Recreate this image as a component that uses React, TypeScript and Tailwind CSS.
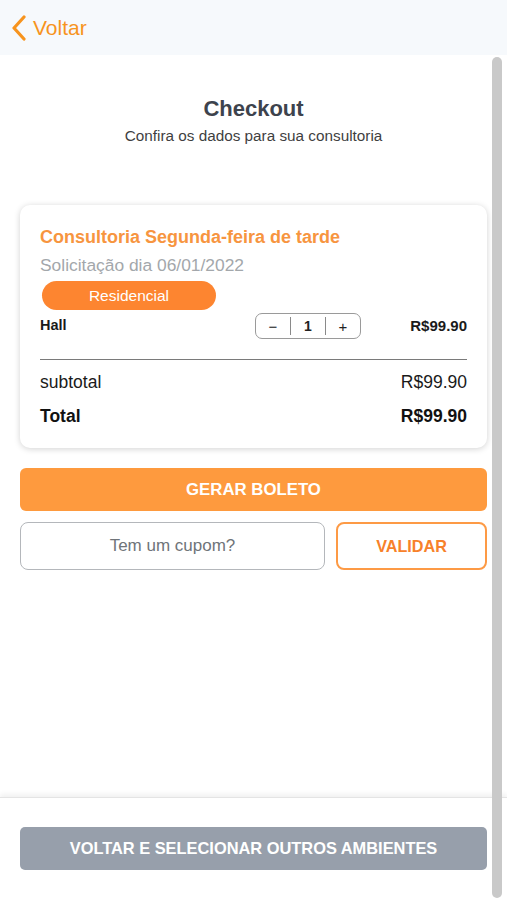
import React from 'react';

const font = { fontFamily: '"Liberation Sans", Arial, sans-serif' };

function BackChevron() {
  return (
    <svg width="16" height="26" viewBox="0 0 16 26" fill="none">
      <polyline
        points="13,2 3,13 13,24"
        stroke="#f7941e"
        strokeWidth="3.2"
        strokeLinecap="round"
        strokeLinejoin="round"
      />
    </svg>
  );
}

function Stepper({ value }: { value: number }) {
  return (
    <div className="flex items-center h-[26px] w-[106px] rounded-[7px] border border-[#9a9a9a] text-[#222]">
      <span className="flex-1 text-center text-[15px] leading-none">−</span>
      <span className="w-px h-[18px] bg-[#8a8a8a]" />
      <span className="flex-1 text-center text-[14px] font-bold leading-none">{value}</span>
      <span className="w-px h-[18px] bg-[#8a8a8a]" />
      <span className="flex-1 text-center text-[15px] leading-none">+</span>
    </div>
  );
}

export default function App() {
  return (
    <div className="relative w-[507px] h-[900px] flex flex-col bg-white overflow-hidden" style={font}>
      {/* header */}
      <div className="h-[55px] shrink-0 bg-[#f6f9fc] flex items-center pl-[11px] gap-[6px]">
        <BackChevron />
        <span className="text-[21px] text-[#f7941e] leading-none">Voltar</span>
      </div>

      {/* content */}
      <div className="flex-1 px-5">
        <div className="pt-[41px] text-center">
          <h1 className="text-[22px] font-bold text-[#3d434d] leading-[26px]">Checkout</h1>
          <p className="mt-[5px] text-[15.3px] text-[#3f3f3f] leading-[18px]">Confira os dados para sua consultoria</p>
        </div>

        <div className="mt-[60px] rounded-[10px] bg-white shadow-[0_1px_6px_rgba(0,0,0,0.18)] px-5 pt-[21px] pb-[21px]">
          <p className="text-[18px] font-bold text-[#f7953f] leading-[22px]">Consultoria Segunda-feira de tarde</p>
          <p className="mt-[6px] text-[17.4px] text-[#a3a7ab] leading-[22px]">Solicitação dia 06/01/2022</p>
          <div className="mt-[5px] ml-[2px] w-[174px] h-[29px] rounded-full bg-[#fd8530] flex items-center justify-center">
            <span className="text-[15.5px] text-white">Residencial</span>
          </div>
          <div className="mt-[3px] flex items-center h-[26px]">
            <span className="text-[14.5px] font-bold text-[#1a1a1a] w-[215px]">Hall</span>
            <Stepper value={1} />
            <span className="ml-auto text-[15px] font-bold text-[#1a1a1a]">R$99.90</span>
          </div>
          <div className="mt-5 h-px bg-[#7a7a7a]" />
          <div className="mt-[11px] flex justify-between text-[17.5px] text-[#1a1a1a] leading-[22px]">
            <span>subtotal</span>
            <span>R$99.90</span>
          </div>
          <div className="mt-[12px] flex justify-between text-[17.5px] font-bold text-[#111] leading-[22px]">
            <span>Total</span>
            <span>R$99.90</span>
          </div>
        </div>

        <button className="mt-5 w-full h-[43px] rounded-[6px] bg-[#fe9a3e] text-white text-[16.8px] font-bold">
          GERAR BOLETO
        </button>

        <div className="mt-[11px] flex gap-[11px]">
          <div className="w-[305px] h-[48px] rounded-[8px] border border-[#b4b7bb] flex items-center justify-center">
            <span className="text-[17px] text-[#6f7479]">Tem um cupom?</span>
          </div>
          <button className="flex-1 h-[48px] rounded-[8px] border-2 border-[#fd9a45] text-[#f7812a] text-[16.2px] font-bold">
            VALIDAR
          </button>
        </div>
      </div>

      {/* footer */}
      <div className="h-[103px] shrink-0 bg-white border-t border-[#e4e4e4] shadow-[0_-3px_5px_rgba(0,0,0,0.06)] px-5 pt-[29px]">
        <button className="w-full h-[43px] rounded-[5px] bg-[#979fab] text-white text-[16.4px] font-bold">
          VOLTAR E SELECIONAR OUTROS AMBIENTES
        </button>
      </div>

      {/* scroll indicator */}
      <div className="absolute right-[5px] top-[57px] w-[10px] h-[841px] rounded-full bg-[#c9c9c9]" />
    </div>
  );
}
